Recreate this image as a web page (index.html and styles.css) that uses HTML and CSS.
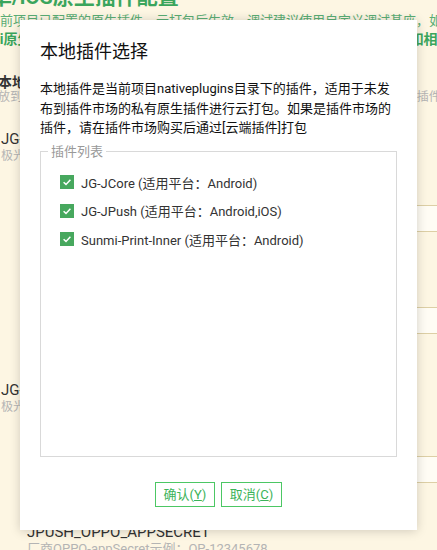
FILE: index.html
```html
<!DOCTYPE html>
<html lang="zh-CN">
<head>
<meta charset="utf-8">
<title>本地插件选择</title>
<link rel="stylesheet" href="styles.css">
</head>
<body>
<div class="page">
  <h1 class="page-title">安卓/iOS原生插件配置</h1>
  <p class="intro">当前项目已配置的原生插件，云打包后生效，调试建议使用自定义调试基座，如需调整请修改配置</p>
  <p class="intro intro-strong">uni原生插件需要使用自定义调试基座才能在真机上运行并正常生效，如相关插件未配置请先添加</p>
  <section class="group">
    <h2 class="group-title">本地插件</h2>
    <p class="group-hint">放到项目nativeplugins目录下面的本地原生插件，打包时会合并提交到云端原生插件</p>

    <div class="plugin">
      <h3 class="plugin-name">JG-JCore</h3>
      <p class="plugin-hint">极光推送核心插件</p>
      <div class="field">
        <div class="field-label">JCORE_APPKEY</div>
        <div class="field-hint">极光推送appKey，示例：a1b2c3d4e5</div>
        <div class="field-input"></div>
      </div>
      <div class="field">
        <div class="field-label">JCORE_CHANNEL</div>
        <div class="field-hint">渠道名称，示例：developer-default</div>
        <div class="field-input"></div>
      </div>
    </div>

    <div class="plugin">
      <h3 class="plugin-name">JG-JPush</h3>
      <p class="plugin-hint">极光推送插件</p>
      <div class="field">
        <div class="field-label">JPUSH_OPPO_APPKEY</div>
        <div class="field-hint">厂商OPPO-appKey示例：OP-12345678</div>
        <div class="field-input"></div>
      </div>
      <div class="field">
        <div class="field-label">JPUSH_OPPO_APPSECRET</div>
        <div class="field-hint">厂商OPPO-appSecret示例：OP-12345678</div>
        <div class="field-input"></div>
      </div>
    </div>
  </section>
</div>

<div class="dialog">
  <h2 class="dialog-title">本地插件选择</h2>
  <p class="dialog-desc">本地插件是当前项目nativeplugins目录下的插件，适用于未发布到插件市场的私有原生插件进行云打包。如果是插件市场的插件，请在插件市场购买后通过[云端插件]打包</p>
  <fieldset class="plugin-list">
    <legend class="plugin-list-legend">插件列表</legend>
    <label class="check-row">
      <span class="check-box"><svg viewBox="0 0 14 14" width="14" height="14"><path d="M3.6 7.2 L6 9.4 L10.4 4.8" fill="none" stroke="#fff" stroke-width="1.5"/></svg></span>
      <span class="check-text">JG-JCore (适用平台：Android)</span>
    </label>
    <label class="check-row">
      <span class="check-box"><svg viewBox="0 0 14 14" width="14" height="14"><path d="M3.6 7.2 L6 9.4 L10.4 4.8" fill="none" stroke="#fff" stroke-width="1.5"/></svg></span>
      <span class="check-text">JG-JPush (适用平台：Android,iOS)</span>
    </label>
    <label class="check-row">
      <span class="check-box"><svg viewBox="0 0 14 14" width="14" height="14"><path d="M3.6 7.2 L6 9.4 L10.4 4.8" fill="none" stroke="#fff" stroke-width="1.5"/></svg></span>
      <span class="check-text">Sunmi-Print-Inner (适用平台：Android)</span>
    </label>
  </fieldset>
  <div class="dialog-footer">
    <button class="btn btn-ok" type="button">确认(<u>Y</u>)</button>
    <button class="btn btn-cancel" type="button">取消(<u>C</u>)</button>
  </div>
</div>
</body>
</html>
```

FILE: styles.css
```css
html, body {
  margin: 0;
  padding: 0;
}

body {
  width: 437px;
  height: 550px;
  overflow: hidden;
  position: relative;
  background: #fdf6e3;
  font-family: Roboto, "Noto Sans CJK SC", sans-serif;
  color: #333;
}

.page {
  margin-left: -13px;
  width: 470px;
}

.page p, .page h1, .page h2, .page h3 {
  margin: 0;
  white-space: nowrap;
}

.page-title {
  margin-top: -16px !important;
  margin-left: -17px !important;
  font-size: 21px;
  line-height: 26px;
  font-weight: bold;
  color: #3aa55c;
}

.intro {
  margin-top: 1px !important;
  font-size: 13px;
  line-height: 19px;
  color: #5aad74;
}

.intro-strong {
  margin-top: 0 !important;
  font-size: 14px;
  font-weight: bold;
  color: #3aa55c;
  margin-left: -3px !important;
}

.group {
  margin-top: 24px;
  padding-left: 11px;
}

.group-title {
  font-size: 14px;
  line-height: 18px;
  font-weight: bold;
  color: #333;
}

.group-hint {
  font-size: 12px;
  line-height: 12px;
  color: #b4b4b4;
}

.plugin {
  padding-left: 3px;
  margin-top: 26px;
}

.plugin + .plugin {
  margin-top: 46px;
}

.plugin-name {
  font-size: 15px;
  line-height: 20px;
  font-weight: normal;
  color: #333;
}

.plugin-hint {
  margin-top: 1px !important;
  font-size: 12px;
  line-height: 12px;
  color: #b4b4b4;
}

.field {
  margin-left: 26px;
  margin-top: 39px;
}

.plugin-hint + .field {
  margin-top: 7px;
}

.field-label {
  font-size: 15px;
  line-height: 20px;
  color: #333;
}

.field-hint {
  font-size: 13px;
  line-height: 13px;
  color: #b4b4b4;
}

.field-input {
  margin-top: 3px;
  height: 25px;
  width: 460px;
  background: #fffcf4;
  border-top: 1px solid #ddcfa5;
  border-bottom: 1px solid #ddcfa5;
}

/* dialog */
.dialog {
  position: absolute;
  left: 20px;
  top: 20px;
  width: 397px;
  height: 510px;
  box-sizing: border-box;
  padding: 20px 20px 23px;
  background: #fff;
  box-shadow: 0 1px 10px rgba(0, 0, 0, 0.18);
  display: flex;
  flex-direction: column;
}

.dialog-title {
  margin: 0;
  font-size: 18px;
  line-height: 24px;
  font-weight: normal;
  color: #111;
}

.dialog-desc {
  margin: 15px 0 0;
  font-size: 13px;
  line-height: 19.5px;
  color: #111;
}

.plugin-list {
  margin: 4px 0 0;
  padding: 0 0 0 19px;
  flex: 1;
  min-height: 0;
  border: 1px solid #d9d9d9;
  display: flex;
  flex-direction: column;
}

.plugin-list-legend {
  margin-left: -12px;
  padding: 0 3px;
  font-size: 13px;
  line-height: 19.5px;
  color: #999;
}

.check-row {
  display: flex;
  align-items: center;
  gap: 7px;
  height: 28.5px;
  font-size: 13px;
  color: #333;
}

.check-row:first-of-type {
  margin-top: 7px;
}

.check-box {
  width: 14px;
  height: 14px;
  background: #47a85e;
  display: flex;
}

.dialog-footer {
  margin-top: 25px;
  display: flex;
  justify-content: center;
  gap: 6px;
}

.btn {
  height: 25px;
  padding: 0 6px;
  background: #fff;
  border: 1px solid #4cc764;
  color: #3cb35a;
  font-family: Roboto, "Noto Sans CJK SC", sans-serif;
  font-size: 13px;
  line-height: 23px;
}

.btn-ok {
  width: 60px;
}

.btn-cancel {
  width: 61px;
}
```
